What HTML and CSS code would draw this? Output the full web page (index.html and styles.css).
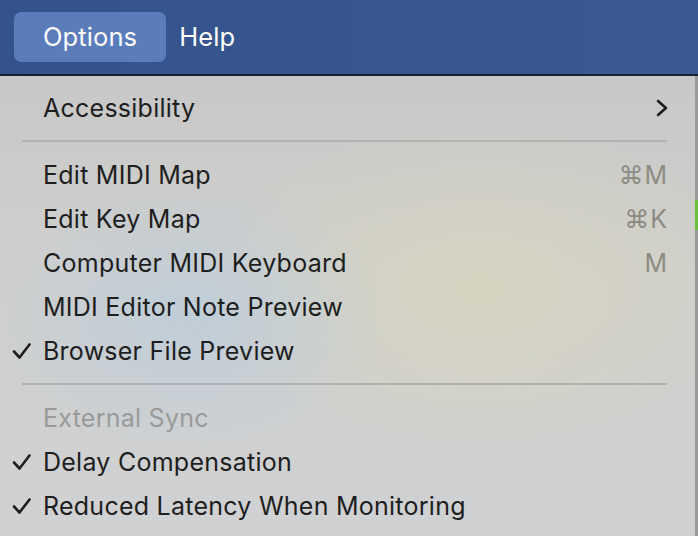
FILE: index.html
```html
<!DOCTYPE html>
<html>
<head>
<meta charset="utf-8">
<link rel="stylesheet" href="styles.css">
</head>
<body>
<div class="screen">
  <div class="menubar">
    <div class="mb-item active">Options</div>
    <div class="mb-item">Help</div>
  </div>
  <div class="content">
    <div class="menu">
      <div class="row"><span class="chk"></span><span class="label">Accessibility</span><span class="sc"><svg class="chev" width="14" height="18" viewBox="0 0 14 18"><path d="M3 2 L11 9 L3 16" fill="none" stroke="#1e1e1e" stroke-width="2.6" stroke-linecap="round" stroke-linejoin="round"/></svg></span></div>
      <div class="sep"></div>
      <div class="row"><span class="chk"></span><span class="label">Edit MIDI Map</span><span class="sc">⌘M</span></div>
      <div class="row"><span class="chk"></span><span class="label">Edit Key Map</span><span class="sc">⌘K</span></div>
      <div class="row"><span class="chk"></span><span class="label">Computer MIDI Keyboard</span><span class="sc">M</span></div>
      <div class="row"><span class="chk"></span><span class="label">MIDI Editor Note Preview</span><span class="sc"></span></div>
      <div class="row"><span class="chk"><svg width="20" height="18" viewBox="0 0 20 18"><path d="M2 9.5 L7.5 15.5 L17.5 2.5" fill="none" stroke="#1e1e1e" stroke-width="2.6" stroke-linecap="round" stroke-linejoin="round"/></svg></span><span class="label">Browser File Preview</span><span class="sc"></span></div>
      <div class="sep"></div>
      <div class="row disabled"><span class="chk"></span><span class="label">External Sync</span><span class="sc"></span></div>
      <div class="row"><span class="chk"><svg width="20" height="18" viewBox="0 0 20 18"><path d="M2 9.5 L7.5 15.5 L17.5 2.5" fill="none" stroke="#1e1e1e" stroke-width="2.6" stroke-linecap="round" stroke-linejoin="round"/></svg></span><span class="label">Delay Compensation</span><span class="sc"></span></div>
      <div class="row"><span class="chk"><svg width="20" height="18" viewBox="0 0 20 18"><path d="M2 9.5 L7.5 15.5 L17.5 2.5" fill="none" stroke="#1e1e1e" stroke-width="2.6" stroke-linecap="round" stroke-linejoin="round"/></svg></span><span class="label">Reduced Latency When Monitoring</span><span class="sc"></span></div>
    </div>
    <div class="strip"><div class="green"></div></div>
  </div>
</div>
</body>
</html>
```
FILE: styles.css
```css
html, body { margin: 0; padding: 0; }
body { width: 698px; height: 536px; overflow: hidden; background: #c6c6c6; font-family: Inter, "Noto Sans", "Liberation Sans", sans-serif; }
.screen { display: flex; flex-direction: column; width: 698px; height: 536px; }
.menubar { height: 74px; background: linear-gradient(90deg, #34528c, #3a5993); border-bottom: 2px solid #16202e; display: flex; align-items: center; padding-left: 14px; gap: 13px; box-sizing: content-box; }
.mb-item { color: #fff; font-size: 25.5px; height: 50px; line-height: 50px; padding: 0 29px; border-radius: 7px; letter-spacing: 0.1px; }
.mb-item.active { background: #5b7cbb; }
.mb-item:not(.active) { padding: 0; }
.content { flex: 1; display: flex; }
.menu { width: 695px; border-top-right-radius: 12px; padding-top: 10px; box-sizing: border-box;
  background:
    radial-gradient(ellipse 200px 140px at 190px 240px, rgba(182,204,222,0.6), rgba(182,204,222,0) 100%),
    radial-gradient(ellipse 280px 170px at 480px 215px, rgba(216,213,190,0.85), rgba(216,213,190,0) 100%),
    linear-gradient(180deg, #c8c8c8 0%, #cfcfcd 40%, #d0d1d3 100%);
}
.row { height: 44px; display: flex; align-items: center; color: #1e1e1e; font-size: 25px; letter-spacing: 0.25px; padding-right: 27px; }
.row.disabled { color: #9a9a9a; }
.chk { width: 43px; flex: none; display: flex; align-items: center; padding-left: 12px; box-sizing: border-box; }
.chk svg { display: block; }
.label { flex: 1; white-space: nowrap; }
.sc { color: #8c8c84; letter-spacing: 1px; display: flex; align-items: center; }
.chev { display: block; margin-right: -1px; }
.sep { height: 2px; background: #b2b2b0; margin: 10px 28px 11px 22px; }
.strip { flex: 1; background: #9a9a9a; display: flex; flex-direction: column; padding-top: 124px; }
.green { height: 30px; background: #6bbf3a; }
```
